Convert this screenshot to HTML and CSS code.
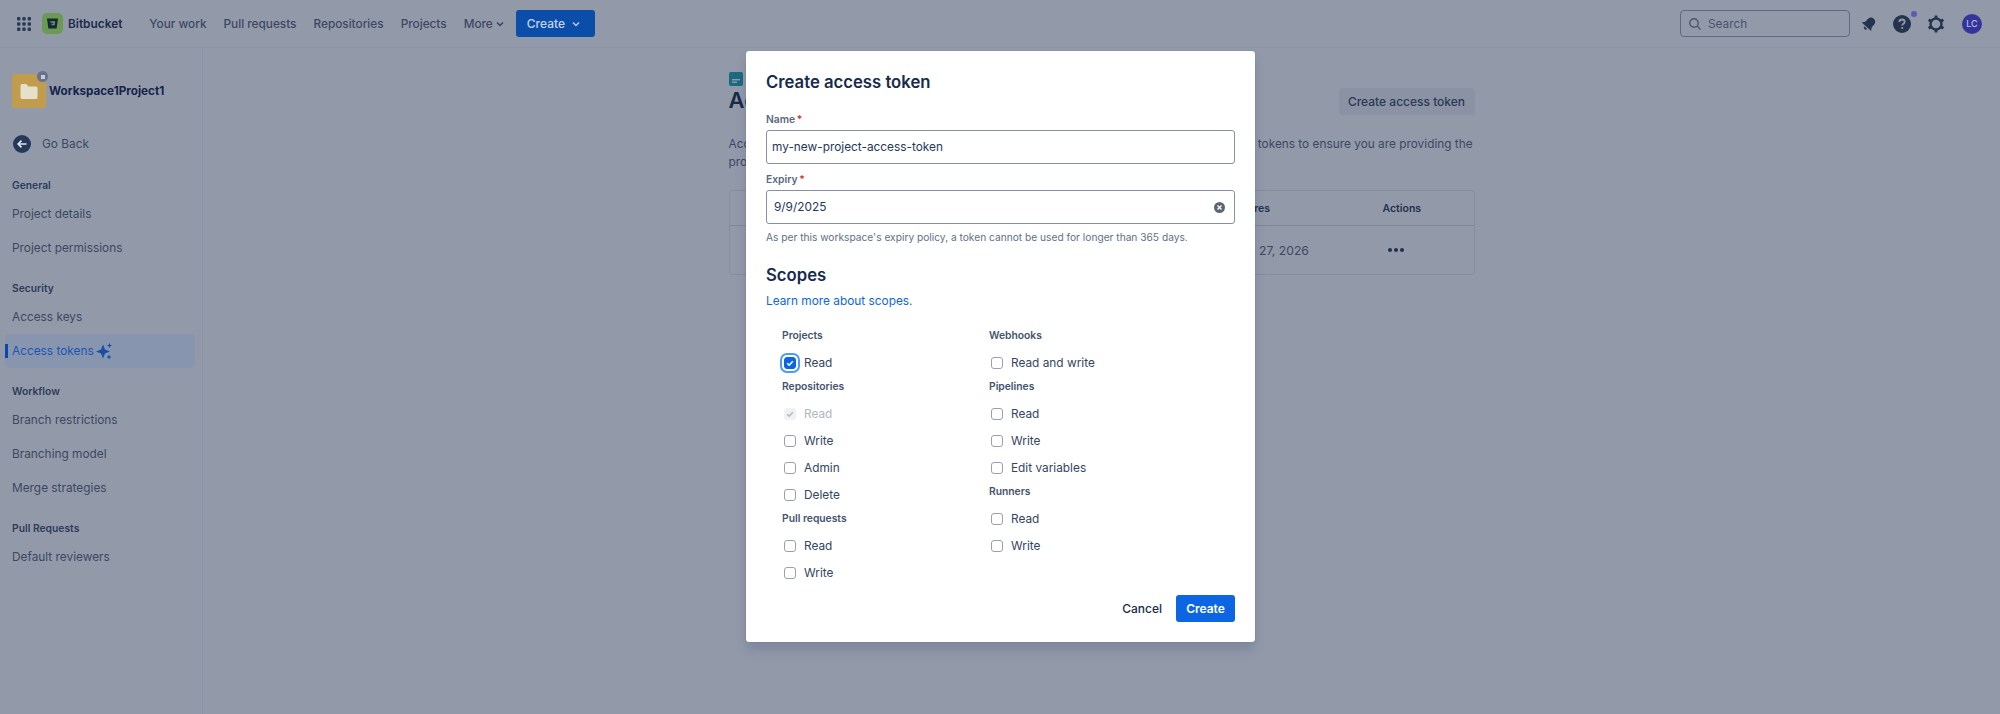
FILE: index.html
```html
<!DOCTYPE html>
<html lang="en">
<head>
    <meta charset="UTF-8">
    <meta name="viewport" content="width=device-width, initial-scale=1.0">
    <title>Access tokens</title>
    <link rel="stylesheet" href="styles.css">
</head>
<body>
    <header class="topbar">
        <svg class="apps-icon" width="16" height="16" viewBox="0 0 16 16" fill="#2b3a58">
            <rect x="1" y="1" width="3.4" height="3.4" rx="1"/><rect x="6.3" y="1" width="3.4" height="3.4" rx="1"/><rect x="11.6" y="1" width="3.4" height="3.4" rx="1"/>
            <rect x="1" y="6.3" width="3.4" height="3.4" rx="1"/><rect x="6.3" y="6.3" width="3.4" height="3.4" rx="1"/><rect x="11.6" y="6.3" width="3.4" height="3.4" rx="1"/>
            <rect x="1" y="11.6" width="3.4" height="3.4" rx="1"/><rect x="6.3" y="11.6" width="3.4" height="3.4" rx="1"/><rect x="11.6" y="11.6" width="3.4" height="3.4" rx="1"/>
        </svg>
        <div class="logo">
            <svg width="21" height="21" viewBox="0 0 21 21">
                <rect width="21" height="21" rx="5" fill="#6b9a55"/>
                <path d="M5 5.500h11l-1.400 10H6.400z" fill="#14263a"/>
                <path d="M8.300 8.300h4.800l-.5 3.900H9.600l-.2-1.400h1.800l.1-1.100H8.500z" fill="#6b9a55"/>
            </svg>
            <span class="logo-name">Bitbucket</span>
        </div>
        <nav class="main-nav">
            <a>Your work</a>
            <a>Pull requests</a>
            <a>Repositories</a>
            <a>Projects</a>
            <a class="more">More
                <svg width="10" height="10" viewBox="0 0 10 10" fill="none" stroke="#35435f" stroke-width="1.5"><path d="M2 3.500l3 3 3-3"/></svg>
            </a>
        </nav>
        <button class="create-btn">Create
            <svg width="10" height="10" viewBox="0 0 10 10" fill="none" stroke="#b9cbe8" stroke-width="1.5"><path d="M2 3.500l3 3 3-3"/></svg>
        </button>
        <div class="topbar-right">
            <div class="search">
                <svg width="14" height="14" viewBox="0 0 14 14" fill="none" stroke="#4b5870" stroke-width="1.4"><circle cx="6" cy="6" r="4.2"/><path d="M9.200 9.200l3.300 3.300"/></svg>
                <span>Search</span>
            </div>
            <svg class="bell" width="16" height="16" viewBox="0 0 16 16" fill="#24344f">
                <g transform="rotate(42 8 8)">
                    <path d="M8 .8C5.300.8 3.800 2.800 3.800 5.500v3.300L1.600 11.800h12.800l-2.200-3V5.500C12.200 2.800 10.700.8 8 .8z"/>
                    <path d="M6 12.800a2 2 0 0 0 4 0z"/>
                </g>
            </svg>
            <div class="help">
                <svg width="20" height="20" viewBox="0 0 20 20">
                    <circle cx="10" cy="10" r="9" fill="#24344f"/>
                    <path d="M7.400 8c0-1.500 1.100-2.500 2.700-2.500S12.700 6.500 12.700 8c0 1.700-2.500 1.800-2.500 3.500" fill="none" stroke="#929aaa" stroke-width="1.800"/>
                    <circle cx="10.200" cy="14" r="1.100" fill="#929aaa"/>
                </svg>
                <span class="help-dot"></span>
            </div>
            <svg class="gear" width="20" height="20" viewBox="0 0 20 20" fill="none" stroke="#24344f">
                <circle cx="10" cy="10" r="5.500" stroke-width="2.400"/>
                <path d="M10 1.500v3M10 15.500v3M2.600 5.700l2.600 1.500M14.800 12.800l2.600 1.500M2.600 14.300l2.600-1.500M14.800 7.200l2.600-1.500" stroke-width="2.800"/>
            </svg>
            <div class="avatar">LC</div>
        </div>
    </header>

    <div class="layout">
        <aside class="sidebar">
            <div class="project">
                <div class="project-icon">
                    <svg width="20" height="17" viewBox="0 0 18 16" fill="#e6dfcc"><path d="M1 2.500A1.500 1.500 0 0 1 2.500 1h4l2 2.300h7A1.500 1.500 0 0 1 17 4.800v8.700a1.500 1.500 0 0 1-1.500 1.500h-13A1.500 1.500 0 0 1 1 13.500z"/></svg>
                    <span class="lock-badge"><i></i></span>
                </div>
                <span class="project-name">Workspace1Project1</span>
            </div>
            <div class="go-back">
                <svg width="18" height="18" viewBox="0 0 18 18">
                    <circle cx="9" cy="9" r="9" fill="#26385a"/>
                    <path d="M13.500 9H5.500M8.500 5.700L5.200 9l3.300 3.300" fill="none" stroke="#dfe3ea" stroke-width="1.700"/>
                </svg>
                <span>Go Back</span>
            </div>

            <h4 class="side-heading">General</h4>
            <a class="side-item">Project details</a>
            <a class="side-item">Project permissions</a>

            <h4 class="side-heading">Security</h4>
            <a class="side-item">Access keys</a>
            <a class="side-item active">Access tokens
                <svg class="sparkle" width="17" height="17" viewBox="0 0 17 17" fill="#174ea6">
                    <path d="M7 1.500l2 5 5 2-5 2-2 5-2-5-5-2 5-2z"/>
                    <path d="M13.500 0l.8 1.700 1.700.8-1.700.8-.8 1.700-.8-1.700-1.700-.8 1.700-.8z"/>
                    <path d="M13 11.500l.8 1.700 1.700.8-1.700.8-.8 1.700-.8-1.700-1.700-.8 1.700-.8z"/>
                </svg>
            </a>

            <h4 class="side-heading">Workflow</h4>
            <a class="side-item">Branch restrictions</a>
            <a class="side-item">Branching model</a>
            <a class="side-item">Merge strategies</a>

            <h4 class="side-heading">Pull Requests</h4>
            <a class="side-item">Default reviewers</a>
        </aside>

        <main class="content">
            <div class="page">
                <div class="page-head">
                    <div>
                        <svg class="crumb-icon" width="14" height="14" viewBox="0 0 14 14">
                            <rect width="14" height="14" rx="2" fill="#1a6a80"/>
                            <rect x="3" y="7" width="8" height="1.400" fill="#929aaa"/>
                            <rect x="3" y="9.500" width="5" height="1.400" fill="#929aaa"/>
                        </svg>
                        <h1>Access tokens</h1>
                    </div>
                    <button class="ghost-btn">Create access token</button>
                </div>
                <p class="intro">Access tokens are single-purpose passwords to access projects. You can now create multiple tokens to ensure you are providing the proper permissions for each use.</p>
                <div class="token-table">
                    <div class="table-row table-head">
                        <span>Name</span><span>Expires</span><span>Actions</span>
                    </div>
                    <div class="table-row">
                        <span>my-token</span><span>Aug 27, 2026</span>
                        <span class="dots"><i></i><i></i><i></i></span>
                    </div>
                </div>
            </div>
        </main>
    </div>

    <div class="modal-wrap">
        <div class="modal">
            <h2>Create access token</h2>

            <label class="field-label">Name <em>*</em></label>
            <div class="text-field">my-new-project-access-token</div>

            <label class="field-label expiry-label">Expiry <em>*</em></label>
            <div class="text-field date-field">
                <span>9/9/2025</span>
                <svg width="11" height="11" viewBox="0 0 11 11">
                    <circle cx="5.500" cy="5.500" r="5.500" fill="#5b6577"/>
                    <path d="M3.500 3.500l4 4M7.500 3.500l-4 4" stroke="#fff" stroke-width="1.300"/>
                </svg>
            </div>
            <p class="help-text">As per this workspace's expiry policy, a token cannot be used for longer than 365 days.</p>

            <h3>Scopes</h3>
            <a class="learn-more">Learn more about scopes.</a>

            <div class="scopes">
                <div class="scope-col">
                    <div class="scope-title">Projects</div>
                    <div class="scope-row"><span class="box checked"><svg width="12" height="12" viewBox="0 0 12 12" fill="none" stroke="#fff" stroke-width="1.600"><path d="M3.200 6.200l2 2 3.600-4"/></svg></span>Read</div>
                    <div class="scope-title">Repositories</div>
                    <div class="scope-row disabled"><span class="box"><svg width="12" height="12" viewBox="0 0 12 12" fill="none" stroke="#b4b9c3" stroke-width="1.600"><path d="M3.200 6.200l2 2 3.600-4"/></svg></span>Read</div>
                    <div class="scope-row"><span class="box"></span>Write</div>
                    <div class="scope-row"><span class="box"></span>Admin</div>
                    <div class="scope-row"><span class="box"></span>Delete</div>
                    <div class="scope-title">Pull requests</div>
                    <div class="scope-row"><span class="box"></span>Read</div>
                    <div class="scope-row"><span class="box"></span>Write</div>
                </div>
                <div class="scope-col">
                    <div class="scope-title">Webhooks</div>
                    <div class="scope-row"><span class="box"></span>Read and write</div>
                    <div class="scope-title">Pipelines</div>
                    <div class="scope-row"><span class="box"></span>Read</div>
                    <div class="scope-row"><span class="box"></span>Write</div>
                    <div class="scope-row"><span class="box"></span>Edit variables</div>
                    <div class="scope-title">Runners</div>
                    <div class="scope-row"><span class="box"></span>Read</div>
                    <div class="scope-row"><span class="box"></span>Write</div>
                </div>
            </div>

            <div class="modal-actions">
                <button class="cancel-btn">Cancel</button>
                <button class="primary-btn">Create</button>
            </div>
        </div>
    </div>
</body>
</html>
```

FILE: styles.css
```css
* {
    box-sizing: border-box;
}
body {
    margin: 0;
    height: 714px;
    overflow: hidden;
    background: #929aaa;
    color: #3b4863;
    font-family: Inter, "Liberation Sans", sans-serif;
    font-size: 11.85px;
}
a {
    text-decoration: none;
}
button {
    font-family: inherit;
    border: none;
}

/* top bar */
.topbar {
    display: flex;
    align-items: center;
    height: 48px;
    padding-left: 16px;
    border-bottom: 1px solid #8b93a4;
}
.logo {
    display: flex;
    align-items: center;
    gap: 5px;
    margin-left: 10px;
}
.logo svg {
    display: block;
}
.logo-name {
    font-weight: 600;
    color: #1c2b4a;
}
.main-nav {
    display: flex;
    gap: 17px;
    margin-left: 27px;
    font-size: 11.8px;
    font-weight: 500;
}
.more {
    display: flex;
    align-items: center;
    gap: 2px;
}
.create-btn {
    display: flex;
    align-items: center;
    justify-content: space-between;
    width: 79px;
    height: 27px;
    margin-left: 11px;
    padding: 0 14px 0 11px;
    border-radius: 3px;
    background: #0b4eaa;
    color: #c5d3ea;
    font-size: 12px;
    font-weight: 500;
}
.topbar-right {
    display: flex;
    align-items: center;
    margin-left: auto;
    padding-right: 18px;
}
.search {
    display: flex;
    align-items: center;
    gap: 6px;
    width: 170px;
    height: 27px;
    padding-left: 7px;
    border: 1px solid #5d6a82;
    border-radius: 4px;
    color: #46536d;
}
.bell {
    margin-left: 11px;
}
.help {
    position: relative;
    width: 20px;
    height: 20px;
    margin-left: 15px;
}
.help svg {
    display: block;
}
.help-dot {
    position: absolute;
    top: -3px;
    right: -5px;
    width: 6px;
    height: 6px;
    border-radius: 50%;
    background: #5a5cb4;
}
.gear {
    margin-left: 14px;
}
.avatar {
    display: flex;
    align-items: center;
    justify-content: center;
    width: 20px;
    height: 20px;
    margin-left: 16px;
    border-radius: 50%;
    background: #34359a;
    color: #b9bce0;
    font-size: 9px;
    font-weight: 500;
}

/* sidebar */
.layout {
    display: flex;
    height: 666px;
}
.sidebar {
    width: 203px;
    padding: 26px 7px 0 5px;
    border-right: 1px solid #8b93a4;
}
.project {
    display: flex;
    align-items: center;
    gap: 3px;
    padding-left: 7px;
}
.project-icon {
    position: relative;
    display: flex;
    align-items: center;
    justify-content: center;
    width: 34px;
    height: 34px;
    border-radius: 3px;
    background: #c09c4c;
}
.lock-badge {
    position: absolute;
    top: -3px;
    right: -2px;
    display: flex;
    align-items: center;
    justify-content: center;
    width: 11px;
    height: 11px;
    border-radius: 50%;
    background: #65738f;
}
.lock-badge i {
    width: 4px;
    height: 4px;
    background: #c6cbd6;
}
.project-name {
    font-size: 11.7px;
    font-weight: 700;
    color: #16244a;
}
.go-back {
    display: flex;
    align-items: center;
    gap: 11px;
    margin-top: 27px;
    margin-bottom: 24px;
    padding-left: 8px;
}
.side-heading {
    margin: 15px 0 4px;
    padding-left: 7px;
    font-size: 10.3px;
    line-height: 16px;
    font-weight: 600;
    color: #2e3c5a;
}
.go-back + .side-heading {
    margin-top: 0;
}
.side-item {
    position: relative;
    display: flex;
    align-items: center;
    height: 34px;
    padding-left: 7px;
    border-radius: 4px;
}
.side-item.active {
    background: #8895ae;
    color: #1b55b4;
}
.side-item.active::before {
    content: "";
    position: absolute;
    left: 0;
    top: 10px;
    width: 3px;
    height: 14px;
    background: #0b47ad;
}
.sparkle {
    margin-left: 2px;
}

/* page behind the dialog */
.content {
    flex: 1;
    padding-top: 24px;
}
.page {
    width: 746px;
    margin: 0 auto;
}
.page-head {
    display: flex;
    justify-content: space-between;
    align-items: flex-end;
}
.crumb-icon {
    display: block;
}
.page-head h1 {
    margin: 0;
    font-size: 22px;
    line-height: 29px;
    font-weight: 600;
    color: #1a2947;
}
.ghost-btn {
    width: 136px;
    height: 27px;
    border-radius: 3px;
    background: #8a92a4;
    color: #2a3857;
    font-size: 12px;
    font-weight: 500;
    white-space: nowrap;
}
.intro {
    margin: 20px 0 0;
    line-height: 18px;
}
.token-table {
    width: 746px;
    margin-top: 19px;
    border: 1px solid #858d9f;
    border-radius: 3px;
    font-size: 12.2px;
}
.table-row {
    display: grid;
    grid-template-columns: 479px 150px 1fr;
    align-items: center;
    height: 48px;
    padding-left: 24px;
}
.table-head {
    height: 35px;
    border-bottom: 1px solid #7f879a;
    font-size: 10.5px;
    font-weight: 600;
    color: #22304e;
}
.dots {
    display: flex;
    gap: 2px;
    padding-left: 5px;
}
.dots i {
    width: 4px;
    height: 4px;
    border-radius: 50%;
    background: #22304e;
}

/* dialog */
.modal-wrap {
    position: absolute;
    top: 51px;
    left: 1px;
    right: 0;
    display: flex;
    justify-content: center;
}
.modal {
    width: 509px;
    height: 591px;
    padding: 20px;
    border-radius: 3px;
    background: #fff;
    box-shadow: 0 8px 12px rgba(9, 30, 66, 0.15), 0 0 1px rgba(9, 30, 66, 0.31);
    color: #344563;
}
.modal h2 {
    margin: 0;
    font-size: 16.7px;
    line-height: 22px;
    font-weight: 600;
    color: #172b4d;
}
.field-label {
    display: block;
    margin-top: 19px;
    font-size: 10.3px;
    line-height: 14px;
    font-weight: 600;
    color: #5a6780;
}
.field-label em {
    margin-left: -1px;
    color: #c9372c;
    font-style: normal;
}
.expiry-label {
    margin-top: 8px;
}
.text-field {
    display: flex;
    align-items: center;
    height: 34px;
    margin-top: 4px;
    padding-left: 5px;
    border: 1px solid #8590a2;
    border-radius: 3px;
    color: #253858;
}
.date-field {
    justify-content: space-between;
    padding: 0 9px 0 7px;
}
.help-text {
    margin: 5px 0 0;
    font-size: 10.2px;
    line-height: 16px;
    color: #626f86;
}
.modal h3 {
    margin: 19px 0 0;
    font-size: 16.7px;
    line-height: 22px;
    font-weight: 600;
    color: #172b4d;
}
.learn-more {
    display: block;
    margin-top: 7px;
    line-height: 16px;
    color: #0c66e4;
}
.scopes {
    display: grid;
    grid-template-columns: 207px 1fr;
    margin-top: 16px;
    padding-left: 16px;
}
.scope-title {
    margin: 3px 0 7px;
    font-size: 10.3px;
    line-height: 14px;
    font-weight: 600;
    color: #44546f;
}
.scope-row {
    display: flex;
    align-items: center;
    gap: 8px;
    height: 27px;
}
.box {
    display: flex;
    width: 12px;
    height: 12px;
    margin-left: 2px;
    border: 1px solid #9aa1ad;
    border-radius: 3px;
}
.box svg {
    margin: -1px;
    flex: none;
}
.box.checked {
    border-color: #0c66e4;
    background: #0c66e4;
    box-shadow: 0 0 0 2px #fff, 0 0 0 4px #4c9aff;
}
.disabled {
    color: #b0b6c1;
}
.disabled .box {
    border-color: #f0f1f3;
    background: #f0f1f3;
}
.modal-actions {
    display: flex;
    justify-content: flex-end;
    align-items: center;
    gap: 14px;
    margin-top: 9px;
}
.cancel-btn {
    padding: 0;
    background: none;
    color: #172b4d;
    font-size: 12px;
    font-weight: 500;
}
.primary-btn {
    width: 59px;
    height: 27px;
    border-radius: 3px;
    background: #0c66e4;
    color: #fff;
    font-size: 12px;
    font-weight: 600;
}
```
